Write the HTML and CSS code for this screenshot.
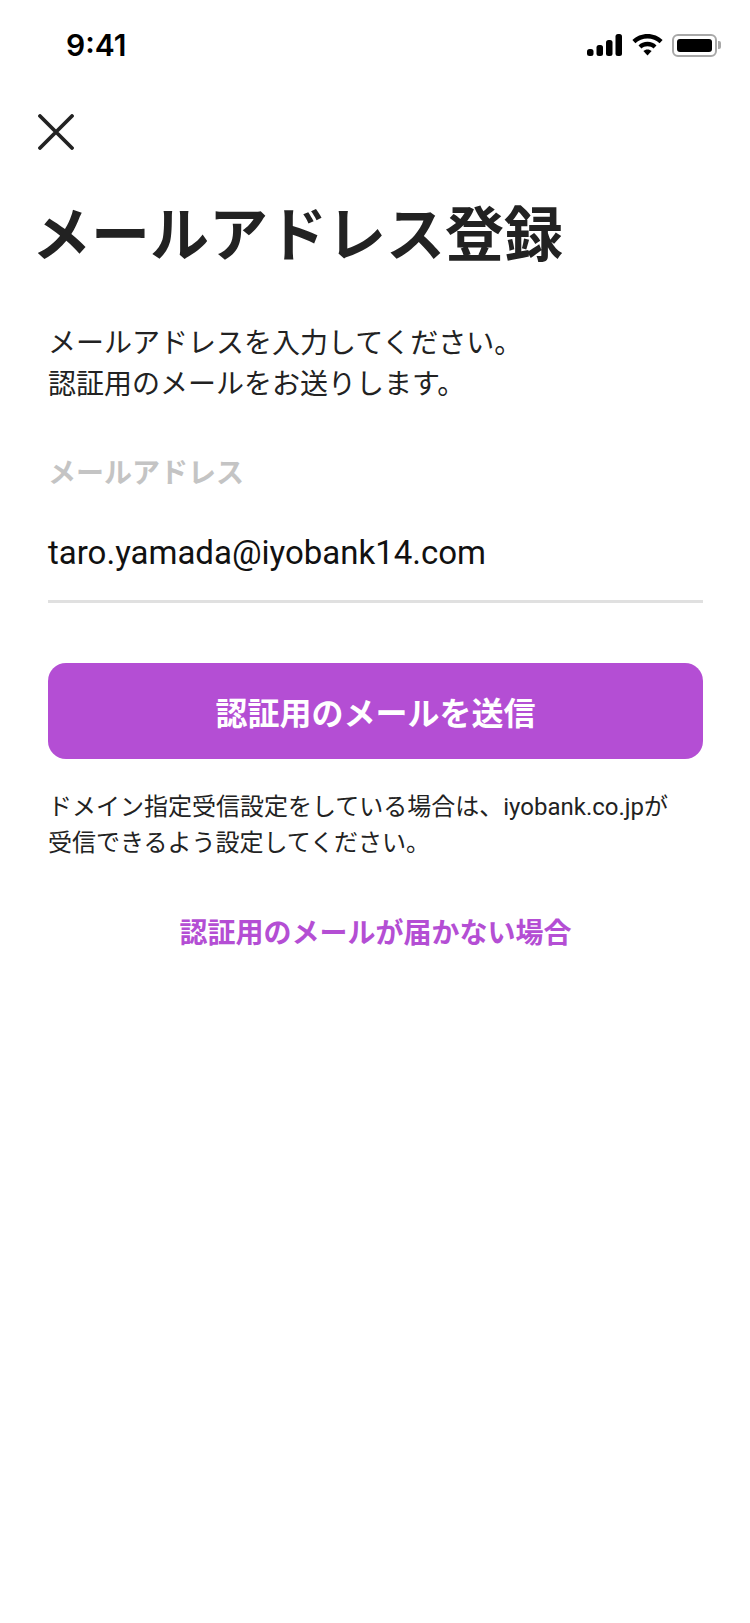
FILE: index.html
```html
<!DOCTYPE html>
<html lang="ja">
<head>
    <meta charset="UTF-8">
    <meta name="viewport" content="width=device-width, initial-scale=1.0">
    <title>メールアドレス登録</title>
    <link rel="stylesheet" href="styles.css">
</head>
<body>
    <div class="tela">
        <div class="status-bar">
            <span class="hora">9:41</span>
            <div class="status-icones">
                <svg class="icone-sinal" width="36" height="22" viewBox="0 0 36 22">
                    <rect x="0" y="15" width="6.5" height="7" rx="2.5"/>
                    <rect x="9.5" y="11" width="6.5" height="11" rx="2.5"/>
                    <rect x="19" y="6" width="6.5" height="16" rx="2.5"/>
                    <rect x="28.5" y="0" width="6.5" height="22" rx="2.5"/>
                </svg>
                <svg class="icone-wifi" width="31" height="22" viewBox="0 0 31 22">
                    <path d="M15.5 0C9.6 0 4.3 2.3.4 6.1l3 3.1C6.5 6.200 10.800 4.400 15.500 4.400s9 1.800 12.100 4.800l3-3.100C26.700 2.300 21.400 0 15.500 0z"/>
                    <path d="M15.500 7.800c-3.500 0-6.700 1.400-9 3.600l3 3.100c1.500-1.400 3.600-2.300 6-2.300s4.500.9 6 2.300l3-3.100c-2.300-2.200-5.500-3.600-9-3.600z"/>
                    <path d="M15.500 15.500c-1.600 0-3 .6-4.100 1.600l4.100 4.400 4.100-4.400c-1.100-1-2.500-1.600-4.100-1.600z"/>
                </svg>
                <div class="bateria">
                    <div class="bateria-corpo"><div class="bateria-nivel"></div></div>
                    <div class="bateria-ponta"></div>
                </div>
            </div>
        </div>

        <button class="fechar" aria-label="閉じる">
            <svg width="36" height="36" viewBox="0 0 36 36">
                <path d="M2 2L34 34M34 2L2 34" stroke="#222222" stroke-width="3.8" stroke-linecap="round" fill="none"/>
            </svg>
        </button>

        <h1 class="titulo">メールアドレス登録</h1>

        <div class="conteudo">
            <p class="descricao">メールアドレスを入力してください。<br>認証用のメールをお送りします。</p>
            <label class="rotulo">メールアドレス</label>
            <p class="campo">taro.yamada@iyobank14.com</p>
            <button class="botao">認証用のメールを送信</button>
            <p class="aviso">ドメイン指定受信設定をしている場合は、iyobank.co.jpが<br>受信できるよう設定してください。</p>
            <a class="link" href="#">認証用のメールが届かない場合</a>
        </div>
    </div>
</body>
</html>
```

FILE: styles.css
```css
* {
    margin: 0;
    padding: 0;
    box-sizing: border-box;
}
body {
    background-color: #ffffff;
    color: #222222;
    font-family: Roboto, "Noto Sans CJK JP", sans-serif;
}
.tela {
    width: 750px;
    height: 1623px;
    overflow: hidden;
}
.status-bar {
    display: flex;
    justify-content: space-between;
    align-items: center;
    height: 46px;
    margin-top: 22px;
    padding: 0 29px 0 66px;
}
.hora {
    font-family: Inter, sans-serif;
    font-size: 30px;
    font-weight: 600;
    color: #000000;
}
.status-icones {
    display: flex;
    align-items: center;
    gap: 9px;
}
.icone-sinal, .icone-wifi {
    display: block;
}
.bateria {
    display: flex;
    align-items: center;
    gap: 1px;
}
.bateria-corpo {
    width: 45px;
    height: 23px;
    padding: 3px;
    border: 2px solid #a8a8a8;
    border-radius: 6px;
}
.bateria-nivel {
    height: 100%;
    background-color: #000000;
    border-radius: 3px;
}
.bateria-ponta {
    width: 3px;
    height: 8px;
    background-color: #a8a8a8;
    border-radius: 0 2px 2px 0;
}
.fechar {
    display: block;
    margin: 46px 0 0 38px;
    width: 36px;
    height: 36px;
    background: none;
    border: none;
}
.fechar svg {
    display: block;
}
.titulo {
    margin: 51px 0 0 32px;
    font-size: 59px;
    font-weight: 700;
    line-height: 70px;
    color: #222222;
}
.conteudo {
    display: flex;
    flex-direction: column;
    margin-top: 52px;
    padding: 0 47px 0 48px;
}
.descricao {
    font-size: 28px;
    line-height: 41px;
    font-weight: 400;
}
.rotulo {
    margin-top: 49px;
    font-size: 28px;
    line-height: 40px;
    font-weight: 700;
    color: #c4c4c4;
}
.campo {
    margin-top: 39px;
    padding-bottom: 27px;
    font-size: 33px;
    line-height: 40px;
    color: #111111;
    border-bottom: 3px solid #e0e0e0;
}
.botao {
    height: 96px;
    margin-top: 60px;
    font-family: inherit;
    font-size: 32px;
    font-weight: 700;
    color: #ffffff;
    background-color: #b44ed4;
    border: none;
    border-radius: 18px;
}
.aviso {
    margin-top: 30px;
    font-size: 24px;
    line-height: 36px;
    white-space: nowrap;
}
.link {
    margin-top: 53px;
    text-align: center;
    font-size: 28px;
    line-height: 40px;
    font-weight: 700;
    color: #b44ed4;
    text-decoration: none;
}
```
